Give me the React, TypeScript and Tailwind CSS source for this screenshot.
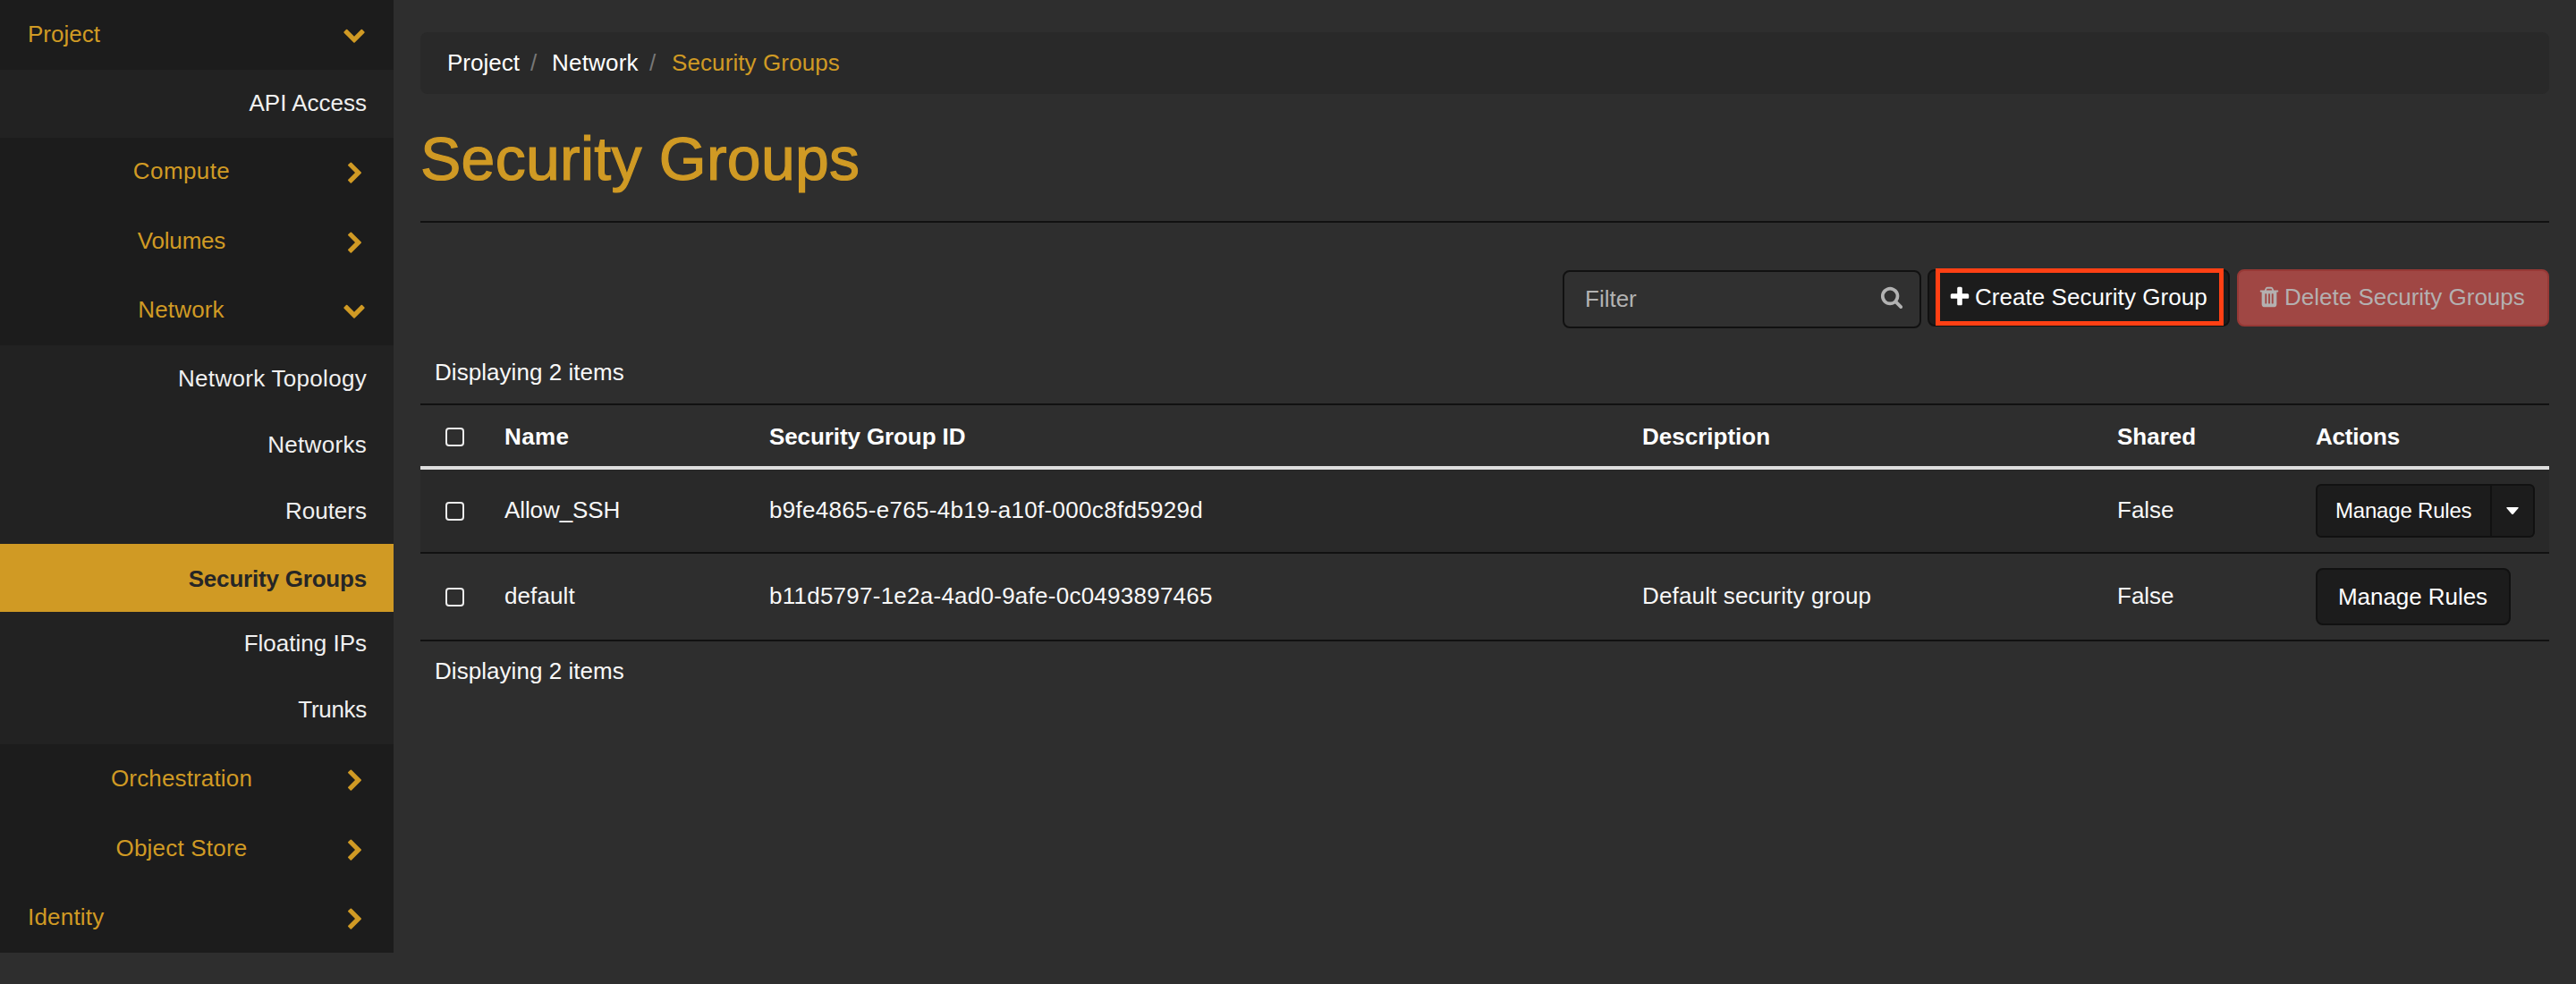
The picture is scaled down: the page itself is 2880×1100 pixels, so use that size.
import type { ReactNode } from 'react';

const ICONS = {
  down: 'M1683 808l-742 741q-19 19-45 19t-45-19l-742-741q-19-19-19-45.5t19-45.5l166-165q19-19 45-19t45 19l531 531 531-531q19-19 45-19t45 19l166 165q19 19 19 45.5t-19 45.5z',
  right: 'M1363 877l-742 742q-19 19-45 19t-45-19l-166-166q-19-19-19-45t19-45l531-531-531-531q-19-19-19-45t19-45l166-166q19-19 45-19t45 19l742 742q19 19 19 45t-19 45z',
  search: 'M1216 832q0-185-131.5-316.5t-316.5-131.5-316.5 131.5-131.5 316.5 131.5 316.5 316.5 131.5 316.5-131.5 131.5-316.5zm512 832q0 52-38 90t-90 38q-54 0-90-38l-343-342q-179 124-399 124-143 0-273.5-55.5t-225-150-150-225-55.5-273.5 55.5-273.5 150-225 225-150 273.5-55.5 273.5 55.5 225 150 150 225 55.5 273.5q0 220-124 399l343 343q37 37 37 90z',
  plus: 'M1600 736v192q0 40-28 68t-68 28h-416v416q0 40-28 68t-68 28h-192q-40 0-68-28t-28-68v-416h-416q-40 0-68-28t-28-68v-192q0-40 28-68t68-28h416v-416q0-40 28-68t68-28h192q40 0 68 28t28 68v416h416q40 0 68 28t28 68z',
  trash: 'M704 1376v-704q0-14-9-23t-23-9h-64q-14 0-23 9t-9 23v704q0 14 9 23t23 9h64q14 0 23-9t9-23zm256 0v-704q0-14-9-23t-23-9h-64q-14 0-23 9t-9 23v704q0 14 9 23t23 9h64q14 0 23-9t9-23zm256 0v-704q0-14-9-23t-23-9h-64q-14 0-23 9t-9 23v704q0 14 9 23t23 9h64q14 0 23-9t9-23zm-544-992h448l-48-117q-7-9-17-11h-317q-10 2-17 11zm928 32v64q0 14-9 23t-23 9h-96v948q0 83-47 143.5t-113 60.5h-832q-66 0-113-58.5t-47-141.5v-952h-96q-14 0-23-9t-9-23v-64q0-14 9-23t23-9h309l70-167q15-37 54-63t79-26h320q40 0 79 26t54 63l70 167h309q14 0 23 9t9 23z',
};

function Icon({ name, className = '' }: { name: keyof typeof ICONS; className?: string }) {
  return (
    <svg viewBox="0 0 1792 1792" fill="currentColor" className={`size-[26px] shrink-0 overflow-visible ${className}`} aria-hidden="true">
      <path d={ICONS[name]} />
    </svg>
  );
}

function Section({ label, open, nested, box, tracking = '' }: { label: string; open?: boolean; nested?: boolean; box: string; tracking?: string }) {
  return (
    <div className={`flex items-start bg-[#1c1c1c] text-[#d09a24] ${nested ? 'pl-[30px]' : 'pl-[31px]'} ${open ? 'pr-[31px]' : 'pr-[30px]'} ${box}`}>
      <span className={`flex-1 ${nested ? 'pr-[8px] text-center' : ''} ${tracking}`}>{label}</span>
      <Icon name={open ? 'down' : 'right'} className={open ? 'mt-[6px]' : 'mt-[9px]'} />
    </div>
  );
}

function Item({ label, box, tracking = '' }: { label: string; box: string; tracking?: string }) {
  return (
    <div className={`bg-[#222222] pr-[30px] text-right text-[#f0f0f0] ${box}`}>
      <span className={tracking}>{label}</span>
    </div>
  );
}

function Sidebar() {
  return (
    <nav className="flex w-[440px] shrink-0 flex-col self-start">
      <Section label="Project" open box="h-[78px] pt-[19px]" />
      <Item label="API Access" box="h-[76px] pt-[18px]" />
      <Section label="Compute" nested box="h-[78px] pt-[18px]" tracking="tracking-[0.4px]" />
      <Section label="Volumes" nested box="h-[77px] pt-[18px]" tracking="tracking-[-0.2px]" />
      <Section label="Network" open nested box="h-[77px] pt-[18px]" tracking="tracking-[0.15px]" />
      <Item label="Network Topology" box="h-[74px] pt-[18px]" tracking="tracking-[0.3px]" />
      <Item label="Networks" box="h-[74px] pt-[18px]" tracking="tracking-[0.3px]" />
      <Item label="Routers" box="h-[74px] pt-[18px]" />
      <div className="h-[76px] bg-[#d09a24] pr-[30px] pt-5 text-right font-bold tracking-[-0.2px] text-[#262626]">Security Groups</div>
      <Item label="Floating IPs" box="h-[74px] pt-4" />
      <Item label="Trunks" box="h-[74px] pt-4" tracking="tracking-[-0.3px]" />
      <Section label="Orchestration" nested box="h-[78px] pt-[19px]" tracking="tracking-[0.15px]" />
      <Section label="Object Store" nested box="h-[77px] pt-[19px]" tracking="tracking-[0.2px]" />
      <Section label="Identity" box="h-[78px] pt-[19px]" tracking="tracking-[0.2px]" />
    </nav>
  );
}

function Checkbox({ className }: { className: string }) {
  return <span className={`ml-[28px] block size-[21px] rounded-[4px] border-2 border-[#ececec] ${className}`} />;
}

const COLS = 'grid grid-cols-[77px_298px_974px_531px_223px_277px] items-start';

function Row({ box, check, text, name, id, description, children }: { box: string; check: string; text: string; name: ReactNode; id: ReactNode; description?: ReactNode; children: ReactNode }) {
  return (
    <div className={`${COLS} border-b-2 border-[#111111] ${box}`}>
      <Checkbox className={check} />
      <div className={`pl-[17px] ${text}`}>{name}</div>
      <div className={`pl-[15px] ${text}`}>{id}</div>
      <div className={`pl-[17px] ${text}`}>{description}</div>
      <div className={`pl-[17px] ${text}`}>False</div>
      <div className="flex pl-4 pt-4">{children}</div>
    </div>
  );
}

export default function App() {
  return (
    <div className="flex h-[1100px] w-[2880px] overflow-hidden bg-[#2e2e2e] font-['Liberation_Sans',Arial,sans-serif] text-[26px] leading-[39px] text-[#f8f8f8]">
      <Sidebar />
      <main className="flex flex-1 flex-col px-[30px] pt-9">
        <div className="flex h-[69px] rounded-lg bg-[#292929] pl-[30px] pt-[15px] text-white">
          <span className="w-[82px]">Project</span>
          <span className="w-[35px] pl-[11px] text-[#777777]">/</span>
          <span className="w-[98px] tracking-[0.2px]">Network</span>
          <span className="w-[36px] pl-[11px] text-[#777777]">/</span>
          <span className="tracking-[0.1px] text-[#d09a24]">Security Groups</span>
        </div>
        <h1 className="h-[144px] border-b-2 border-[#111111] pt-[34px] text-[68px] leading-[76px] tracking-[0.25px] text-[#d09a24] [-webkit-text-stroke:1.2px_#d09a24]">Security Groups</h1>

        <div className="mt-[52px] flex h-[66px] items-start">
          <div className="ml-[1277px] mt-px flex h-[65px] w-[401px] rounded-lg border-2 border-[#111111] bg-[#303030] pl-[23px] pr-[18px] pt-[11px] text-[#b2b2b2]">
            <span className="flex-1">Filter</span>
            <Icon name="search" className="mt-[4.4px]" />
          </div>
          <div className="relative ml-[7px] flex h-[64px] w-[338px] rounded-lg border-2 border-[#111111] bg-[#1c1c1c] pl-[21px] pt-[10px] text-white">
            <Icon name="plus" className="mt-[5.5px]" />
            <span className="ml-[4px] whitespace-nowrap tracking-[0.05px]">Create Security Group</span>
            <span className="absolute -top-[3px] left-[7px] h-[64px] w-[322px] border-[5px] border-[#ff4014]" />
          </div>
          <div className="ml-[8px] flex h-[64px] w-[349px] rounded-lg border-2 border-[#973936] bg-[#a04744] pl-[21px] pt-[10px] text-[#b4b0b0]">
            <Icon name="trash" className="mt-[5.5px]" />
            <span className="ml-[4px] whitespace-nowrap">Delete Security Groups</span>
          </div>
        </div>

        <section className="mt-[30px]">
          <div className="h-[56px] border-b-2 border-[#111111] pl-[16px] tracking-[0.05px]">Displaying 2 items</div>
          <div className={`${COLS} h-[72px] border-b-4 border-[#dedede] font-bold text-white`}>
            <Checkbox className="mt-[25px]" />
            <div className="pl-[17px] pt-4 tracking-[0.4px]">Name</div>
            <div className="pl-[15px] pt-4 tracking-[-0.1px]">Security Group ID</div>
            <div className="pl-[17px] pt-4">Description</div>
            <div className="pl-[17px] pt-4">Shared</div>
            <div className="pl-4 pt-4 tracking-[-0.2px]">Actions</div>
          </div>
          <Row
            box="h-[94px] bg-[#292929]"
            check="mt-[36px]"
            text="pt-[26px]"
            name={<span className="tracking-[-0.1px]">Allow_SSH</span>}
            id={<span className="tracking-[0.3px]">b9fe4865-e765-4b19-a10f-000c8fd5929d</span>}
          >
            <button className="h-[60px] w-[197px] rounded-l-md border-2 border-[#111111] bg-[#1c1c1c] pl-[20px] text-left text-[24px] leading-[56px] tracking-[-0.2px] text-white">Manage Rules</button>
            <button className="flex h-[60px] w-[48px] items-center rounded-r-md border-2 border-l-0 border-[#111111] bg-[#1c1c1c] pl-[16px] text-white">
              <svg viewBox="0 0 14 8" className="h-[8px] w-[14px]" fill="currentColor"><path d="M1 0h12q1 0 .6 1L8 7.4q-1 1-2 0L.4 1Q0 0 1 0z" /></svg>
            </button>
          </Row>
          <Row
            box="h-[98px]"
            check="mt-[38px]"
            text="pt-[28px]"
            name={<span className="tracking-[0.1px]">default</span>}
            id={<span className="tracking-[0.25px]">b11d5797-1e2a-4ad0-9afe-0c0493897465</span>}
            description={<span className="tracking-[0.15px]">Default security group</span>}
          >
            <button className="h-[64px] w-[218px] rounded-lg border-2 border-[#111111] bg-[#1c1c1c] pl-[23px] text-left leading-[58px] tracking-[-0.05px] text-white">Manage Rules</button>
          </Row>
          <div className="pl-[16px] pt-[14px] tracking-[0.05px]">Displaying 2 items</div>
        </section>
      </main>
    </div>
  );
}
